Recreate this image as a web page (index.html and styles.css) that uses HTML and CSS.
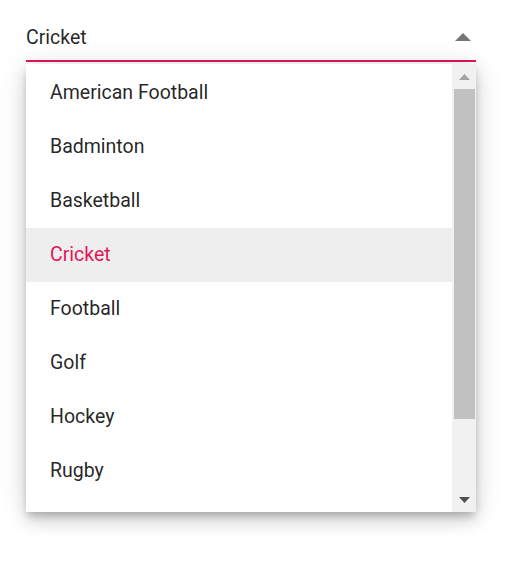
FILE: index.html
```html
<!DOCTYPE html>
<html lang="en">
<head>
<meta charset="utf-8">
<title>Dropdown</title>
<link rel="stylesheet" href="styles.css">
</head>
<body>
<div class="dropdown">
  <div class="input">
    <span class="value">Cricket</span>
    <svg class="caret" width="16" height="8" viewBox="0 0 16 8"><path d="M0 8 L8 0 L16 8 Z" fill="#757575"/></svg>
  </div>
  <div class="popup">
    <ul class="list">
      <li class="item">American Football</li>
      <li class="item">Badminton</li>
      <li class="item">Basketball</li>
      <li class="item selected">Cricket</li>
      <li class="item">Football</li>
      <li class="item">Golf</li>
      <li class="item">Hockey</li>
      <li class="item">Rugby</li>
    </ul>
    <div class="scrollbar">
      <div class="sb-btn">
        <svg width="11" height="6" viewBox="0 0 11 6"><path d="M0 6 L5.5 0 L11 6 Z" fill="#a3a3a3"/></svg>
      </div>
      <div class="sb-track"><div class="sb-thumb"></div></div>
      <div class="sb-btn">
        <svg width="11" height="6" viewBox="0 0 11 6"><path d="M0 0 L5.5 6 L11 0 Z" fill="#505050"/></svg>
      </div>
    </div>
  </div>
</div>
</body>
</html>
```

FILE: styles.css
```css
html, body {
  margin: 0;
  padding: 0;
  background: #ffffff;
}
body {
  font-family: Roboto, "Liberation Sans", sans-serif;
  padding: 22px 0 52px 26px;
}
.dropdown {
  width: 450px;
}
.input {
  display: flex;
  align-items: center;
  justify-content: space-between;
  line-height: 30px;
  font-size: 19.5px;
  color: rgba(0, 0, 0, 0.87);
  padding-top: 1px;
  padding-bottom: 7px;
  border-bottom: 2px solid #e3165b;
}
.caret {
  display: block;
  margin-right: 5px;
  margin-top: -2px;
}
.popup {
  margin-top: 2px;
  height: 448px;
  display: flex;
  background: #fff;
  box-shadow: 0 4.5px 7.5px -1.5px rgba(0,0,0,.2), 0 9px 15px 0 rgba(0,0,0,.14), 0 1.5px 27px 0 rgba(0,0,0,.12);
}
.list {
  list-style: none;
  margin: 0;
  padding: 2px 0 0 0;
  flex: 1;
  overflow: hidden;
}
.item {
  height: 54px;
  line-height: 54px;
  padding: 0 24px;
  font-size: 19.5px;
  color: rgba(0, 0, 0, 0.87);
  white-space: nowrap;
}
.item.selected {
  background: #eeeeee;
  color: #e3165b;
}
.scrollbar {
  width: 24px;
  background: #f1f1f1;
  display: flex;
  flex-direction: column;
}
.sb-btn {
  height: 25px;
  display: flex;
  align-items: center;
  justify-content: center;
  padding-left: 1px;
}
.sb-btn svg {
  display: block;
}
.sb-track {
  flex: 1;
  padding: 0 1px 0 2px;
}
.sb-thumb {
  height: 330px;
  background: #c1c1c1;
}
```
